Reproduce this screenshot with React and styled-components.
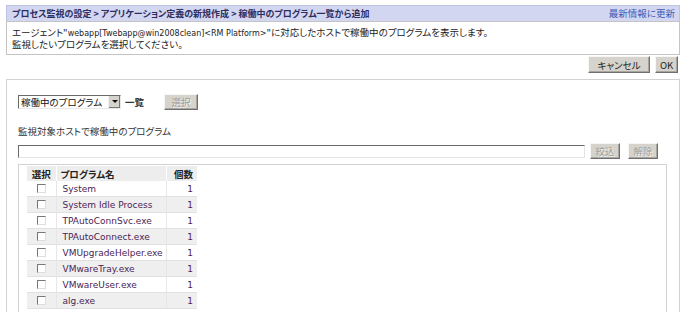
import styled, { createGlobalStyle } from 'styled-components';

const GlobalStyle = createGlobalStyle`
  body {
    margin: 0;
    background: #ffffff;
    font-family: "Noto Sans CJK JP", "DejaVu Sans", sans-serif;
    font-size: 9.5px;
    font-feature-settings: "palt";
    color: #222222;
  }
`;

const Page = styled.div`
  padding: 5px 5px 0 6px;
  width: 674px;
  height: 307px;
  overflow: hidden;
`;

const TitleBar = styled.div`
  display: flex;
  justify-content: space-between;
  align-items: center;
  height: 15px;
  padding: 0 4px 0 5px;
  background: #d3d6f1;
  border: 1px solid #bfc3e3;
  border-bottom: none;
`;

const Title = styled.span`
  font-size: 9px;
  font-weight: bold;
  color: #2d2d5e;
  line-height: 15px;
`;

const UpdateLink = styled.a`
  color: #3b5bb5;
  text-decoration: none;
  line-height: 15px;
`;

const Message = styled.div`
  border: 1px solid #c4c4c4;
  padding: 5px 5px 4px;
  line-height: 11px;
  background: #fff;
`;

const Latin = styled.span`
  font-family: "DejaVu Sans", sans-serif;
  font-size: 8px;
`;

const ActionRow = styled.div`
  display: flex;
  justify-content: flex-end;
  gap: 5px;
  padding: 1px 2px 0 0;
`;

const Button = styled.button`
  height: ${(p) => (p.$tall ? 17 : 16)}px;
  width: ${(p) => p.$w || 30}px;
  padding: 0;
  font-family: "Noto Sans CJK JP", sans-serif;
  font-size: 9.5px;
  font-feature-settings: "palt";
  background: #d6d3cc;
  color: ${(p) => (p.disabled ? '#a09c94' : '#222')};
  text-shadow: ${(p) => (p.disabled ? '1px 1px 0 #f4f4f4' : 'none')};
  border: 1px solid;
  border-color: #f6f6f6 #6f6f6f #6f6f6f #f6f6f6;
  box-shadow: inset -1px -1px 0 #a8a59e;
  line-height: 14px;
  cursor: default;
`;

const Panel = styled.div`
  margin-top: 6px;
  border: 1px solid #d2d2d2;
  border-bottom: none;
  padding: 13px 12px 0 11px;
  height: 240px;
  box-sizing: border-box;
`;

const SelectRow = styled.div`
  display: flex;
  align-items: center;
  gap: 4px;
  height: 17px;
`;

const SelectBox = styled.div`
  display: flex;
  align-items: stretch;
  width: 101px;
  height: 12px;
  border: 1px solid;
  border-color: #6a6a6a #e8e8e8 #e8e8e8 #6a6a6a;
  background: #fff;
`;

const SelectText = styled.span`
  flex: 1;
  padding-left: 2px;
  line-height: 12px;
  color: #111;
`;

const SelectArrow = styled.span`
  width: 11px;
  background: #d6d3cc;
  border-left: 1px solid #f0f0f0;
  display: flex;
  align-items: center;
  justify-content: center;
  box-shadow: inset -1px -1px 0 #777;
  &::after {
    content: '';
    border-left: 3px solid transparent;
    border-right: 3px solid transparent;
    border-top: 3px solid #111;
  }
`;

const ListWord = styled.span`
  margin-right: 16px;
  font-weight: bold;
  color: #333;
  line-height: 12px;
`;

const FieldLabel = styled.div`
  margin-top: 15px;
  height: 12px;
  line-height: 12px;
  color: #333;
`;

const FilterRow = styled.div`
  display: flex;
  align-items: center;
  height: 16px;
  margin-top: 6px;
  padding-right: 9px;
`;

const FilterInput = styled.div`
  flex: 1;
  height: 11px;
  margin-right: 5px;
  border: 1px solid;
  border-color: #6a6a6a #e4e4e4 #e4e4e4 #6a6a6a;
`;

const ListBox = styled.div`
  margin-top: 5px;
  border: 1px solid #d2d2d2;
  border-bottom: none;
  height: 160px;
  padding: 1px 0 0 8px;
`;

const Table = styled.table`
  border-collapse: collapse;
  table-layout: fixed;
  width: 170px;
  font-family: "DejaVu Sans", sans-serif;
  font-size: 9px;
`;

const HeadCell = styled.th`
  height: 15px;
  padding: 0 ${(p) => (p.$align === 'center' ? 0 : 4)}px;
  background: #ededed;
  border-left: ${(p) => (p.$first ? 'none' : '1px solid #fff')};
  font-family: "Noto Sans CJK JP", sans-serif;
  font-size: 9.5px;
  font-weight: bold;
  font-feature-settings: "palt";
  white-space: nowrap;
  color: #222;
  text-align: ${(p) => p.$align || 'left'};
`;

const Row = styled.tr`
  background: ${(p) => (p.$alt ? '#efefef' : '#ffffff')};
  border-bottom: 1px solid #e0e0e0;
`;

const Cell = styled.td`
  height: 15px;
  padding: 0 ${(p) => (p.$align === 'right' ? 4 : 6)}px;
  border-left: 1px solid #e6e6e6;
  color: #4b2456;
  white-space: nowrap;
  text-align: ${(p) => p.$align || 'left'};
  &:first-child {
    border-left: none;
    padding: 0;
  }
`;

const Check = styled.span`
  display: block;
  margin: 0 auto;
  width: 7px;
  height: 7px;
  border: 1px solid;
  border-color: #777 #ddd #ddd #777;
  background: #fff;
`;

const programs = [
  'System',
  'System Idle Process',
  'TPAutoConnSvc.exe',
  'TPAutoConnect.exe',
  'VMUpgradeHelper.exe',
  'VMwareTray.exe',
  'VMwareUser.exe',
  'alg.exe',
];

export default function App() {
  return (
    <>
      <GlobalStyle />
      <Page>
        <TitleBar>
          <Title>
            プロセス監視の設定 &gt; アプリケーション定義の新規作成 &gt; 稼働中のプログラム一覧から追加
          </Title>
          <UpdateLink href="#">最新情報に更新</UpdateLink>
        </TitleBar>
        <Message>
          エージェント"<Latin>webapp[Twebapp@win2008clean]&lt;RM Platform&gt;</Latin>"に対応したホストで稼働中のプログラムを表示します。
          <br />
          監視したいプログラムを選択してください。
        </Message>
        <ActionRow>
          <Button $tall $w={62}>キャンセル</Button>
          <Button $tall $w={23}>OK</Button>
        </ActionRow>
        <Panel>
          <SelectRow>
            <SelectBox>
              <SelectText>稼働中のプログラム</SelectText>
              <SelectArrow />
            </SelectBox>
            <ListWord>一覧</ListWord>
            <Button disabled $w={34}>選択</Button>
          </SelectRow>
          <FieldLabel>監視対象ホストで稼働中のプログラム</FieldLabel>
          <FilterRow>
            <FilterInput />
            <Button disabled $w={30} style={{ marginRight: 8 }}>絞込</Button>
            <Button disabled $w={30}>解除</Button>
          </FilterRow>
          <ListBox>
            <Table>
              <colgroup>
                <col style={{ width: 29 }} />
                <col style={{ width: 110 }} />
                <col style={{ width: 31 }} />
              </colgroup>
              <thead>
                <tr>
                  <HeadCell $first $align="center">選択</HeadCell>
                  <HeadCell>プログラム名</HeadCell>
                  <HeadCell $align="right">個数</HeadCell>
                </tr>
              </thead>
              <tbody>
                {programs.map((name, i) => (
                  <Row key={name} $alt={i % 2 === 1}>
                    <Cell><Check /></Cell>
                    <Cell>{name}</Cell>
                    <Cell $align="right">1</Cell>
                  </Row>
                ))}
              </tbody>
            </Table>
          </ListBox>
        </Panel>
      </Page>
    </>
  );
}
